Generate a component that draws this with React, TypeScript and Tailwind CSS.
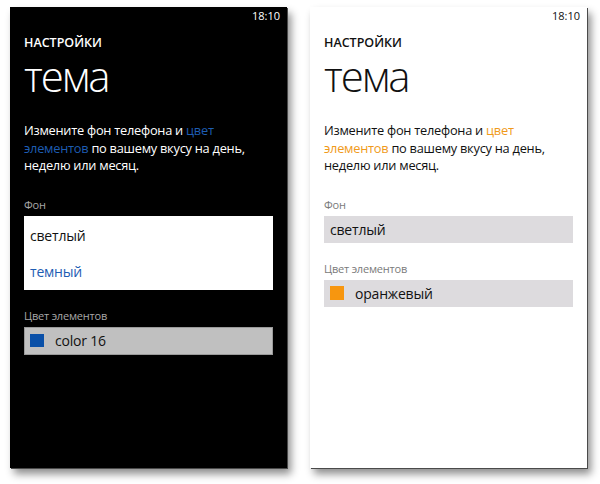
import type { ReactNode } from "react"

type Theme = "dark" | "light"

function Phone({ theme, children }: { theme: Theme; children: ReactNode }) {
  const dark = theme === "dark"
  return (
    <div
      className={
        "flex h-[461px] w-[277px] flex-col px-[14px] shadow-[1px_1px_0_#4a4a4a,4px_6px_8px_rgba(0,0,0,0.45)] " +
        (dark ? "bg-black text-white" : "bg-white text-[#111]")
      }
    >
      <div className="-mr-[7px] flex h-[18px] items-center justify-end text-[11px]">18:10</div>
      <div className="mt-[10px] h-[16px] text-[12.5px] leading-[16px] font-semibold">НАСТРОЙКИ</div>
      <div className="mt-[4px] h-[42px] text-[42px] leading-[42px] font-light tracking-[-2px]">тема</div>
      {children}
    </div>
  )
}

function Intro({ accent }: { accent: string }) {
  return (
    <p className="mt-[25px] text-[12.8px] leading-[17.5px] tracking-[-0.25px]">
      Измените фон телефона и <span className={accent}>цвет элементов</span> по вашему вкусу на день, неделю или месяц.
    </p>
  )
}

export default function App() {
  return (
    <div
      className="flex h-[484px] w-[600px] gap-[23px] bg-white pt-[7px] pl-[10px]"
      style={{ fontFamily: '"Open Sans", "Noto Sans", sans-serif' }}
    >
      <Phone theme="dark">
        <Intro accent="text-[#1e5db3]" />
        <div className="mt-[23px] h-[14px] text-[11px] leading-[14px] tracking-[-0.2px] text-[#a8a8a8]">Фон</div>
        <div className="mt-[4px] flex h-[74px] flex-col bg-white px-[6px] text-[14px] tracking-[-0.2px]">
          <div className="flex h-[38px] items-center pt-[2px] text-[#111]">светлый</div>
          <div className="flex h-[36px] items-center text-[#1e5db3]">темный</div>
        </div>
        <div className="mt-[19px] h-[14px] text-[11px] leading-[14px] tracking-[-0.2px] text-[#a8a8a8]">Цвет элементов</div>
        <div className="mt-[4px] flex h-[28px] items-center gap-[11px] border border-[#9a9a9a] bg-[#c0c0c0] px-[5px] text-[14px] tracking-[-0.2px] text-[#111]">
          <span className="h-[13px] w-[14px] bg-[#0a50a8]" />
          color 16
        </div>
      </Phone>
      <Phone theme="light">
        <Intro accent="text-[#f09a1a]" />
        <div className="mt-[23px] h-[14px] text-[11px] leading-[14px] tracking-[-0.2px] text-[#7a7a7a]">Фон</div>
        <div className="mt-[4px] flex h-[27px] items-center bg-[#dddbde] px-[6px] text-[14px] tracking-[-0.2px]">светлый</div>
        <div className="mt-[19px] h-[14px] text-[11px] leading-[14px] tracking-[-0.2px] text-[#7a7a7a]">Цвет элементов</div>
        <div className="mt-[4px] flex h-[27px] items-center gap-[11px] bg-[#dddbde] px-[6px] text-[14px] tracking-[-0.2px]">
          <span className="h-[14px] w-[14px] bg-[#f7960f]" />
          оранжевый
        </div>
      </Phone>
    </div>
  )
}
